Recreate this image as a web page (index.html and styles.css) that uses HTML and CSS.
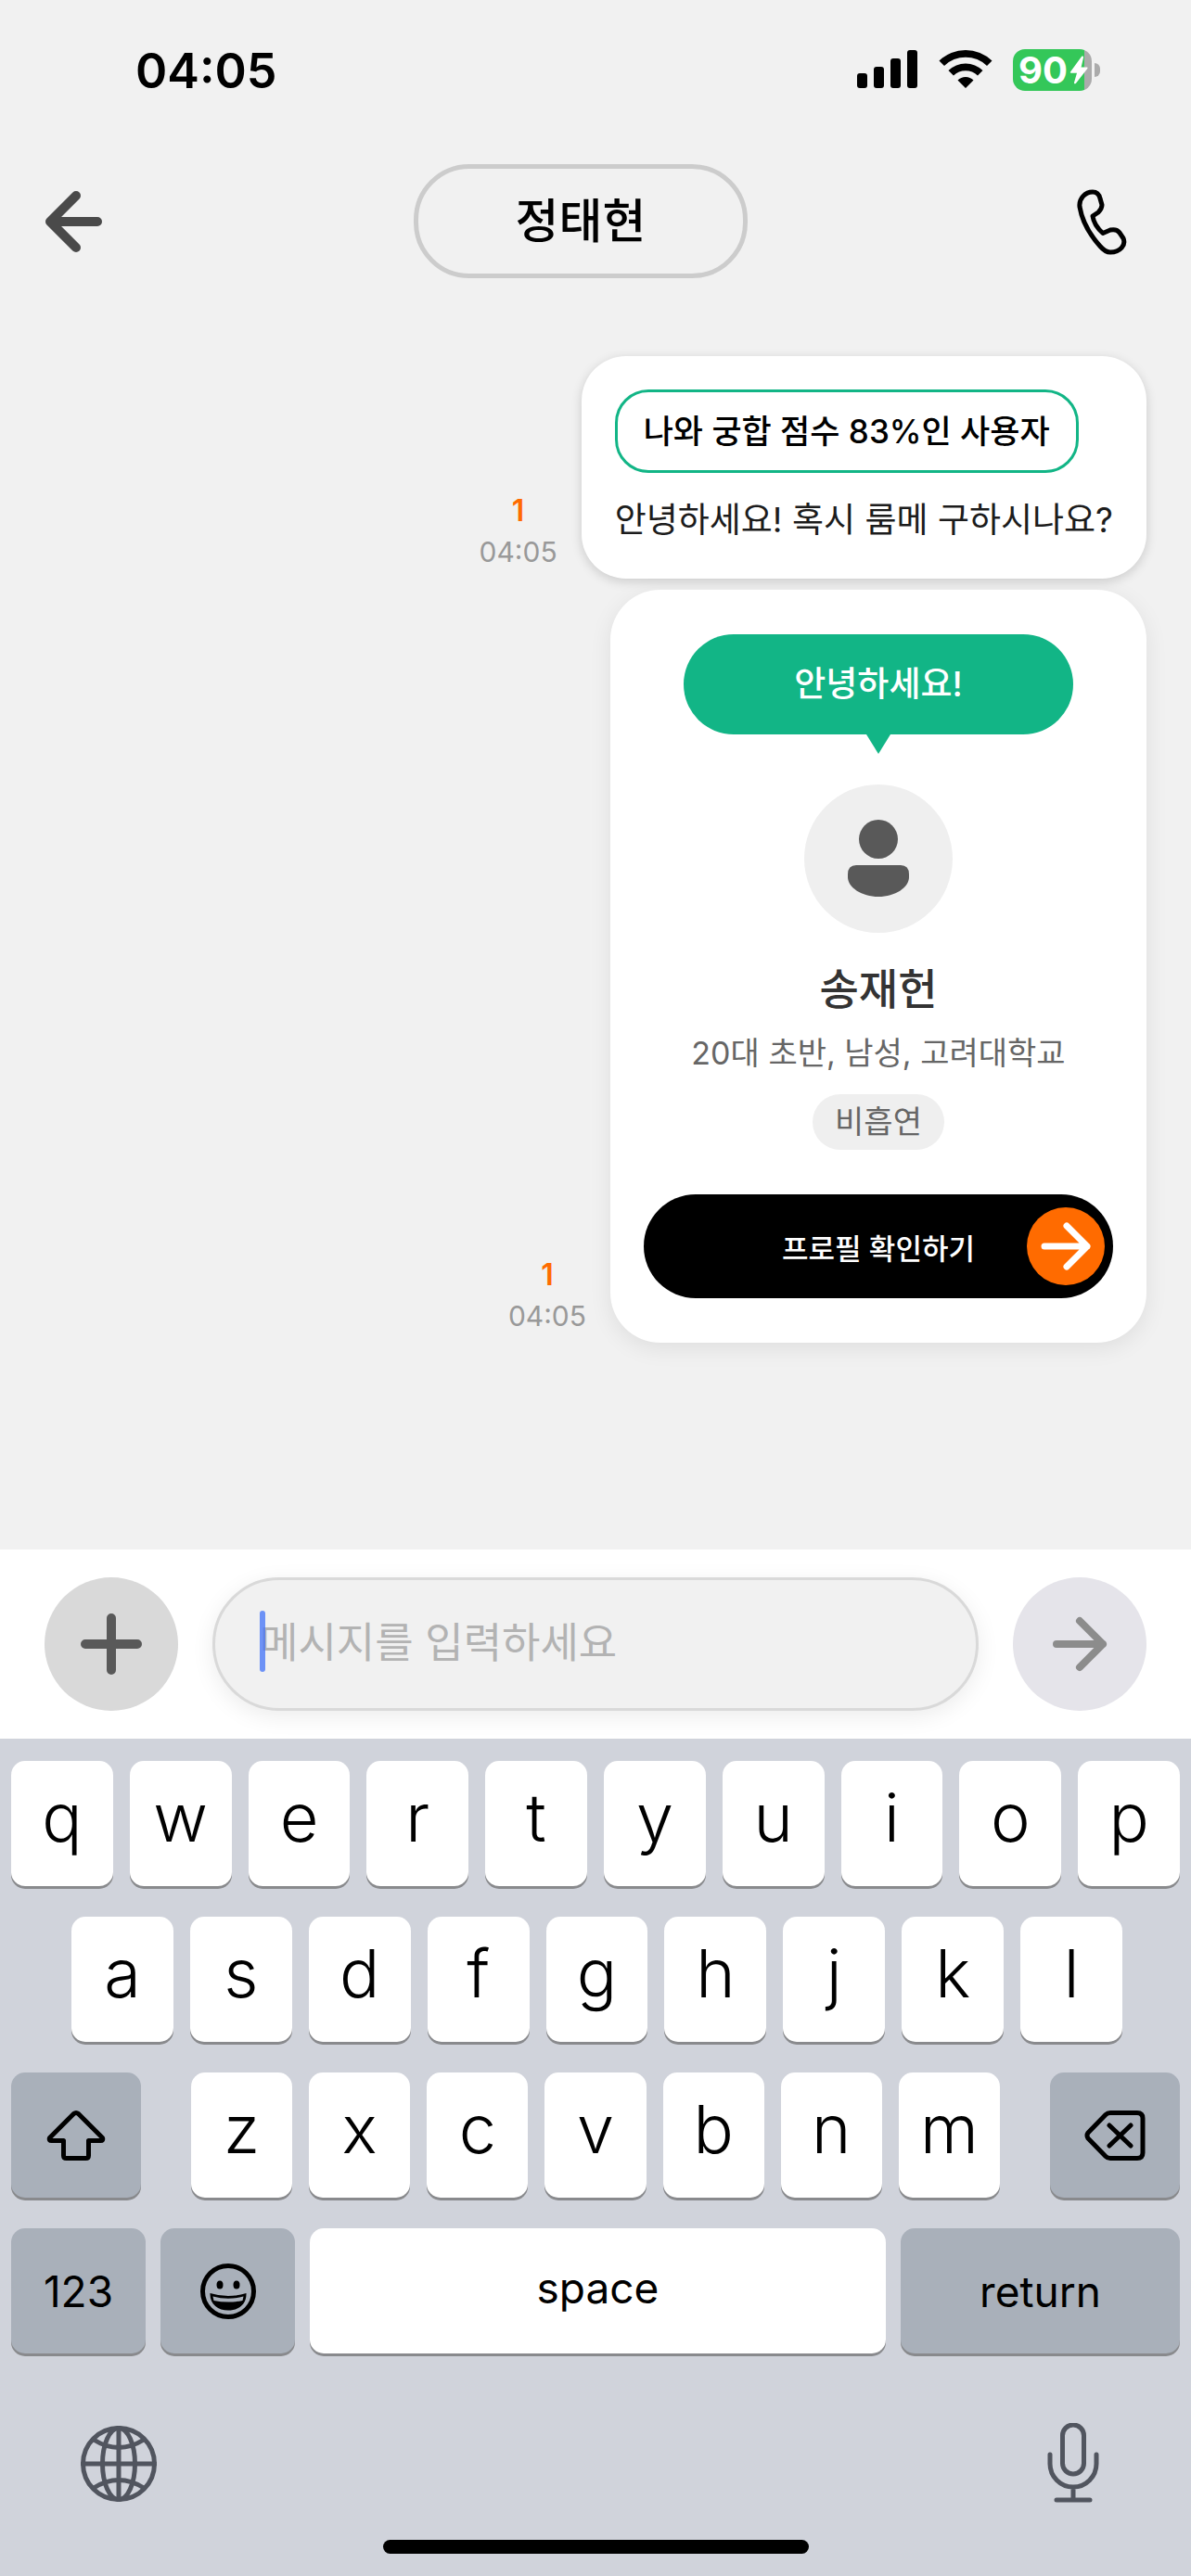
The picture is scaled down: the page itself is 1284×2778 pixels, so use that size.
FILE: index.html
```html
<!DOCTYPE html>
<html lang="ko">
<head>
<meta charset="utf-8">
<meta name="viewport" content="width=device-width, initial-scale=1">
<title>정태현</title>
<link rel="stylesheet" href="styles.css">
</head>
<body>
<div class="screen">
  <div class="status">
    <time class="clock">04:05</time>
    <div class="indicators">
      <svg width="66" height="46" viewBox="0 0 66 46" aria-hidden="true">
        <rect x="0" y="27" width="11" height="16" rx="3"/>
        <rect x="18" y="20" width="11" height="23" rx="3"/>
        <rect x="36" y="11" width="11" height="32" rx="3"/>
        <rect x="54" y="2" width="11" height="41" rx="3"/>
      </svg>
      <svg width="58" height="46" viewBox="0 0 58 46" aria-hidden="true">
        <path d="M0.500 13.500a41 41 0 0 1 57 0l-5.500 5.500a33 33 0 0 0 -46 0zM10.500 24a26.500 26.500 0 0 1 37 0l-5.500 5.500a18.500 18.500 0 0 0 -26 0zM20.500 34.500a12 12 0 0 1 17 0l-8.500 8.500z"/>
      </svg>
      <div class="battery">
        <div class="cell">
          <span>90</span>
          <svg width="20" height="31" viewBox="0 0 20 31" aria-hidden="true"><path d="M13 1 1 17.500c-.4.700-.2 1.200.7 1.200h6.300L5 29c-.3 1.500 1 1.800 2 .7L19.300 14c.5-.8.200-1.400-.7-1.400h-6L15 2.200C15.400.700 14 0 13 1z"/></svg>
        </div>
        <div class="nub"></div>
      </div>
    </div>
  </div>

  <header class="header">
    <button class="back" aria-label="뒤로">
      <svg width="64" height="72" viewBox="0 0 64 72" aria-hidden="true"><path d="M57 36H6M34 8 6 36l28 28"/></svg>
    </button>
    <h1 class="title">정태현</h1>
    <button class="call" aria-label="전화">
      <svg width="64" height="74" viewBox="0 0 64 74" aria-hidden="true"><path d="M22 5C27 5 29 8 30 12L32 19C32 23 30 25 28 27L22 31C23 39 28 45 33 49.500L41 46C46 45 49 46 51 49L55 55C58 62 52 70 41 70C36 70 33 67 30 63.500C17 49 10 33 8 21C7 12 14 5 22 5Z"/></svg>
    </button>
  </header>

  <main class="chat">
    <div class="message">
      <div class="meta"><span class="unread">1</span><time>04:05</time></div>
      <div class="bubble">
        <p class="tag">나와 궁합 점수 83%인 사용자</p>
        <p class="text">안녕하세요! 혹시 룸메 구하시나요?</p>
      </div>
    </div>
    <div class="message">
      <div class="meta"><span class="unread">1</span><time>04:05</time></div>
      <article class="card">
        <p class="greeting">안녕하세요!</p>
        <svg class="avatar" width="160" height="160" viewBox="0 0 160 160" aria-hidden="true">
          <circle cx="80" cy="80" r="80" fill="#efefef"/>
          <circle cx="80" cy="59" r="21" fill="#595959"/>
          <path d="M56 87h48q9 0 9 10v3c0 11-15 21-33 21s-33-10-33-21v-3q0-10 9-10z" fill="#595959"/>
        </svg>
        <h2 class="name">송재헌</h2>
        <p class="info">20대 초반, 남성, 고려대학교</p>
        <span class="chip">비흡연</span>
        <button class="profile">
          <span>프로필 확인하기</span>
          <span class="go"><svg width="54" height="54" viewBox="0 0 54 54" aria-hidden="true"><path d="M4 27h46M28 5l22 22-22 22"/></svg></span>
        </button>
      </article>
    </div>
  </main>

  <form class="composer">
    <button type="button" class="round add" aria-label="추가">
      <svg width="66" height="66" viewBox="0 0 66 66" aria-hidden="true"><path d="M33 5v56M5 33h56"/></svg>
    </button>
    <div class="field">
      <input type="text" aria-label="메시지" placeholder="메시지를 입력하세요">
      <span class="caret"></span>
    </div>
    <button type="button" class="round send" aria-label="보내기">
      <svg width="60" height="60" viewBox="0 0 60 60" aria-hidden="true"><path d="M5 30h50M30 5l25 25-25 25"/></svg>
    </button>
  </form>

  <section class="keyboard" aria-label="키보드">
    <div class="row first">
      <button>q</button><button>w</button><button>e</button><button>r</button><button>t</button><button>y</button><button>u</button><button>i</button><button>o</button><button>p</button>
    </div>
    <div class="row second">
      <button>a</button><button>s</button><button>d</button><button>f</button><button>g</button><button>h</button><button>j</button><button>k</button><button>l</button>
    </div>
    <div class="row third">
      <button class="dark" aria-label="shift">
        <svg width="64" height="56" viewBox="0 0 64 56" aria-hidden="true"><path d="M29.500 4.500 3.500 30.500q-1 3 2 3h13v16q0 3 3 3h21q3 0 3-3v-16h13q3 0 2-3L34.500 4.500q-2.500-2-5 0z"/></svg>
      </button>
      <div class="letters">
        <button>z</button><button>x</button><button>c</button><button>v</button><button>b</button><button>n</button><button>m</button>
      </div>
      <button class="dark" aria-label="delete">
        <svg width="66" height="56" viewBox="0 0 66 56" aria-hidden="true"><path d="M28 3.500h29q6 0 6 6v37q0 6-6 6H28q-3 0-5-2L4 31q-2-3 0-6L23 5.500q2-2 5-2zM27 17l23 22M50 17 27 39"/></svg>
      </button>
    </div>
    <div class="row fourth">
      <button class="dark">123</button>
      <button class="dark" aria-label="emoji">
        <svg width="60" height="60" viewBox="0 0 60 60" aria-hidden="true"><circle cx="30" cy="30" r="27.500"/><ellipse cx="21" cy="23" rx="3.500" ry="4.500" class="solid"/><ellipse cx="39" cy="23" rx="3.500" ry="4.500" class="solid"/><path d="M10.500 32q19.500 6 39 0C50 44 41 50.500 30 50.500S10 44 10.500 32z" class="solid"/><path d="M13.500 35.500q16.500 4.500 33 0l-1 4.500q-15.500 3-31 0z" class="teeth"/></svg>
      </button>
      <button class="space">space</button>
      <button class="dark">return</button>
    </div>
    <div class="tools">
      <button aria-label="다음 키보드">
        <svg width="82" height="82" viewBox="0 0 82 82" aria-hidden="true"><circle cx="41" cy="41" r="38.500"/><ellipse cx="41" cy="41" rx="17.500" ry="38.500"/><path d="M41 2v78M2 41h78M14 15q27 17 54 0M14 67q27-17 54 0"/></svg>
      </button>
      <button aria-label="받아쓰기">
        <svg width="58" height="88" viewBox="0 0 58 88" aria-hidden="true"><rect x="17.500" y="2" width="23" height="53" rx="11.500"/><path d="M4 34v10a25 25 0 0 0 50 0v-10M29 69v14M11 83h36"/></svg>
      </button>
    </div>
    <div class="home"></div>
  </section>
</div>
</body>
</html>
```
FILE: styles.css
```css
* { box-sizing: border-box; }

body {
  margin: 0;
  background: #f1f1f1;
  color: #000;
  font-family: Inter, "Noto Sans CJK KR", sans-serif;
}

h1, h2, p { margin: 0; font-weight: inherit; }

button {
  margin: 0;
  padding: 0;
  border: 0;
  background: none;
  color: inherit;
  font: inherit;
  display: flex;
  align-items: center;
  justify-content: center;
}

svg { display: block; flex: none; }

.screen {
  min-height: 100vh;
  display: flex;
  flex-direction: column;
}

/* Status bar */
.status {
  height: 150px;
  padding: 0 98px 0 146px;
  display: flex;
  align-items: center;
  justify-content: space-between;
}
.clock { padding-top: 4px; font-size: 52px; line-height: 60px; font-weight: 600; }
.indicators { display: flex; align-items: center; gap: 22px; }
.battery { display: flex; align-items: center; gap: 3px; }
.cell {
  width: 85px;
  height: 45px;
  padding-left: 6px;
  border-radius: 13px;
  background: linear-gradient(to right, #34c759 77px, #ababab 77px);
  color: #fff;
  font-size: 40px;
  line-height: 45px;
  font-weight: 700;
  display: flex;
  align-items: center;
  gap: 2px;
}
.cell svg { fill: #fff; }
.nub {
  width: 6px;
  height: 15px;
  border-radius: 0 6px 6px 0;
  background: #ababab;
}

/* Header */
.header {
  padding: 27px 48px 0;
  display: flex;
  align-items: center;
  justify-content: space-between;
}
.header svg {
  fill: none;
  stroke-linecap: round;
  stroke-linejoin: round;
}
.back { width: 64px; height: 96px; }
.back svg { stroke: #4a4a4a; stroke-width: 10px; }
.call { width: 96px; height: 96px; }
.call svg { stroke: #000; stroke-width: 5px; }
.title {
  width: 360px;
  height: 123px;
  border: 5px solid #ccc;
  border-radius: 60px;
  font-size: 51px;
  line-height: 114px;
  font-weight: 500;
  text-align: center;
}

/* Conversation */
.chat {
  flex: 1;
  padding: 84px 48px 48px;
  display: flex;
  flex-direction: column;
  gap: 12px;
}
.message {
  display: flex;
  align-items: flex-end;
  justify-content: flex-end;
  gap: 26px;
}
.meta {
  padding-bottom: 7px;
  display: flex;
  flex-direction: column;
  align-items: center;
  color: #999;
  font-size: 30px;
  line-height: 44px;
}
.unread { color: #ff6b00; font-size: 32px; font-weight: 600; }
.bubble {
  padding: 36px;
  border-radius: 48px;
  background: #fff;
  box-shadow: 0 3px 12px rgba(0, 0, 0, 0.16);
  display: flex;
  flex-direction: column;
  align-items: flex-start;
  gap: 24px;
}
.tag {
  padding: 0 28px;
  border: 3px solid #12b586;
  border-radius: 36px;
  font-size: 35px;
  line-height: 84px;
  font-weight: 500;
}
.text { color: #1c1c1c; font-size: 37px; line-height: 54px; }

.card {
  width: 578px;
  padding: 48px 36px;
  border-radius: 54px;
  background: #fff;
  box-shadow: 0 6px 24px rgba(0, 0, 0, 0.08);
  display: flex;
  flex-direction: column;
  align-items: center;
}
.greeting {
  position: relative;
  width: 420px;
  margin-bottom: 54px;
  border-radius: 54px;
  background: #12b586;
  color: #fff;
  font-size: 37px;
  line-height: 108px;
  font-weight: 500;
  text-align: center;
}
.greeting::after {
  content: "";
  position: absolute;
  top: 100%;
  left: 50%;
  margin-left: -13px;
  border: 13px solid transparent;
  border-top: 21px solid #12b586;
  border-bottom: 0;
}
.name {
  margin-top: 30px;
  color: #333;
  font-size: 46px;
  line-height: 60px;
  font-weight: 500;
}
.info { margin-top: 16px; color: #666; font-size: 34px; line-height: 48px; }
.chip {
  margin-top: 20px;
  padding: 0 24px;
  border-radius: 30px;
  background: #efefef;
  color: #666;
  font-size: 34px;
  line-height: 60px;
}
.profile {
  align-self: stretch;
  height: 112px;
  margin-top: 48px;
  padding: 0 9px;
  border-radius: 56px;
  background: #000;
  color: #fff;
  font-size: 31px;
  font-weight: 500;
  display: grid;
  grid-template-columns: 84px 1fr 84px;
}
.profile span:first-child { grid-column: 2; }
.go {
  height: 84px;
  border-radius: 50%;
  background: #ff6b00;
  display: grid;
  place-items: center;
}
.go svg {
  fill: none;
  stroke: #fff;
  stroke-width: 7px;
  stroke-linecap: round;
  stroke-linejoin: round;
}

/* Composer */
.composer {
  padding: 30px 48px;
  background: #fff;
  display: flex;
  align-items: center;
  gap: 37px;
}
.round {
  flex: none;
  width: 144px;
  height: 144px;
  border-radius: 50%;
}
.round svg { fill: none; stroke-linecap: round; stroke-linejoin: round; }
.add { background: #d9d9d9; }
.add svg { stroke: #595959; stroke-width: 10px; }
.send { background: #e5e4ea; }
.send svg { stroke: #8c8c8c; stroke-width: 8px; }
.field { position: relative; flex: 1; min-width: 0; }
.field input {
  display: block;
  width: 100%;
  height: 144px;
  padding: 0 48px 4px;
  border: 3px solid #d9d9d9;
  border-radius: 72px;
  background: #f1f1f1;
  box-shadow: 0 6px 24px rgba(0, 0, 0, 0.08);
  font: inherit;
  font-size: 45px;
  outline: none;
}
.field input::placeholder { color: #b3b3b3; opacity: 1; }
.caret {
  position: absolute;
  left: 51px;
  top: 36px;
  width: 6px;
  height: 66px;
  border-radius: 3px;
  background: #4374f7;
  opacity: 0.76;
}

/* Keyboard */
.keyboard {
  padding: 24px 12px;
  background: #d0d3db;
  display: flex;
  flex-direction: column;
  gap: 33px;
}
.row { display: grid; gap: 18px; }
.row button {
  height: 135px;
  padding-bottom: 14px;
  border-radius: 15px;
  background: #fff;
  box-shadow: 0 3px 0 #898a8d;
  font-size: 72px;
  font-weight: 350;
}
.row .dark, .row .space {
  padding: 0;
  font-size: 46px;
  font-weight: 400;
}
.row .dark { background: #a9b0ba; }
.row .space { padding-bottom: 8px; }
.first { grid-template-columns: repeat(10, 1fr); }
.second { padding: 0 62px 0 65px; grid-template-columns: repeat(9, 1fr); }
.third { grid-template-columns: 140fr 872fr 140fr; gap: 54px; }
.letters { display: grid; grid-template-columns: repeat(7, 1fr); gap: 18px; }
.fourth { grid-template-columns: 145fr 145fr 621fr 301fr; gap: 16px; }
.dark svg {
  fill: none;
  stroke: #000;
  stroke-width: 5px;
  stroke-linecap: round;
  stroke-linejoin: round;
}
.dark .solid { fill: #000; stroke: none; }
.dark .teeth { fill: #a9b0ba; stroke: none; }
.tools {
  padding: 42px 86px 0 75px;
  display: flex;
  align-items: center;
  justify-content: space-between;
}
.tools svg {
  fill: none;
  stroke: #51555f;
  stroke-width: 5px;
  stroke-linecap: round;
}
.home {
  width: 459px;
  height: 15px;
  margin: 5px auto 0;
  border-radius: 8px;
  background: #000;
}
```
